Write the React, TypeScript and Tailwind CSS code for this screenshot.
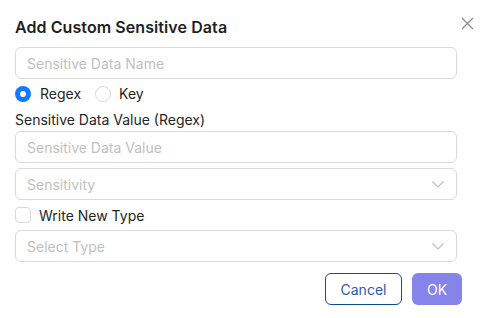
const Chevron = () => (
  <svg width="14" height="14" viewBox="0 0 14 14" fill="none" className="text-[#bfbfbf]">
    <path d="M1.5 4.5 L7 10 L12.5 4.5" stroke="currentColor" strokeWidth="1.2" />
  </svg>
);

const App = () => {
  return (
    <div className="w-[490px] h-[318px] bg-white font-['Inter','Liberation_Sans',sans-serif] text-[14px] text-[#262626] relative">
      <button className="absolute left-[460px] top-[16px] w-[14px] h-[14px] flex items-center justify-center text-[#8c8c8c]">
        <svg width="13" height="13" viewBox="0 0 13 13" fill="none">
          <path d="M1 1 L12 12 M12 1 L1 12" stroke="currentColor" strokeWidth="1.3" />
        </svg>
      </button>
      <div className="flex flex-col pl-[15px] pr-[33px] pt-[15px]">
        <h2 className="h-6 leading-6 text-[16px] font-semibold tracking-[0.08px] text-[#1f1f1f]">Add Custom Sensitive Data</h2>
        <div className="mt-2 h-8 border border-[#d9d9d9] rounded-md px-[11px] flex items-center text-[#bfbfbf]">Sensitive Data Name</div>
        <div className="h-[29px] flex items-center gap-2">
          <label className="flex items-center gap-[9px]">
            <span className="w-4 h-4 rounded-full bg-[#1677ff] flex items-center justify-center">
              <span className="w-[6px] h-[6px] rounded-full bg-white"></span>
            </span>
            <span>Regex</span>
          </label>
          <label className="flex items-center gap-[8px] ml-[6px]">
            <span className="w-4 h-4 rounded-full border border-[#d9d9d9] bg-white"></span>
            <span>Key</span>
          </label>
        </div>
        <div className="h-[23px] flex items-center">Sensitive Data Value (Regex)</div>
        <div className="h-8 border border-[#d9d9d9] rounded-md px-[11px] flex items-center text-[#bfbfbf]">Sensitive Data Value</div>
        <div className="mt-[5px] h-8 border border-[#d9d9d9] rounded-md pl-[11px] pr-[11px] flex items-center justify-between text-[#bfbfbf]">
          <span>Sensitivity</span>
          <Chevron />
        </div>
        <div className="h-[30px] flex items-center gap-2">
          <span className="w-4 h-4 rounded border border-[#d9d9d9] bg-white"></span>
          <span>Write New Type</span>
        </div>
        <div className="h-8 border border-[#d9d9d9] rounded-md pl-[11px] pr-[11px] flex items-center justify-between text-[#bfbfbf]">
          <span>Select Type</span>
          <Chevron />
        </div>
        <div className="mt-[11px] flex justify-end gap-[10px] mr-[-5px]">
          <button className="w-[77px] h-8 rounded-md border border-[#0f4c93] text-[#2a5ea8] bg-white">Cancel</button>
          <button className="w-[50px] h-8 rounded-md bg-[#8484ea] text-white">OK</button>
        </div>
      </div>
    </div>
  );
};

export default App;
